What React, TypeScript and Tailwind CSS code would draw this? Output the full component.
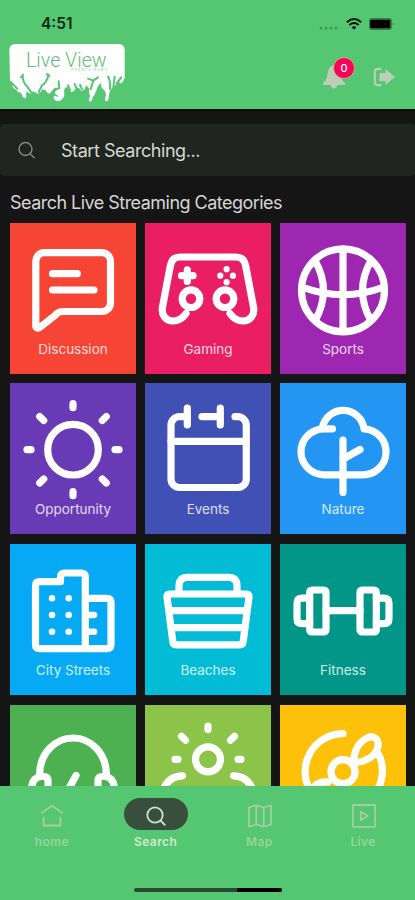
import React from 'react';

interface Category {
    id: number;
    title?: string;
    color: string;
    icon: React.ReactNode;
}

// Icons are drawn in a 126x118 box, the same size as the upper part of a tile
const categories: Category[] = [
    {
        id: 1,
        title: 'Discussion',
        color: 'bg-[#f64435]',
        icon: (
            <>
                <path d="M34.500 29.700H92a8.500 8.500 0 0 1 8.500 8.500V80a8.500 8.500 0 0 1-8.500 8.500H53c-4 0-6 1.200-8 4L31 103.500Q27.500 107 25.800 103.500V38.200A8.500 8.500 0 0 1 34.500 29.700Z" />
                <path d="M42.500 50.700H67.300M42.500 67H84" />
            </>
        ),
    },
    {
        id: 2,
        title: 'Gaming',
        color: 'bg-[#ea1e63]',
        icon: (
            <>
                <path d="M41 90.500c-3 4.500-7 7.500-13 7.500c-7 0-12-6-10.500-14L25.500 42C26.700 37 30 34 35 34H91c5 0 8.300 3 9.500 8l8 42c1.500 8-3.500 14-10.500 14c-6 0-10-3-13-7.500" />
                <circle cx="46" cy="75.700" r="8.800" />
                <circle cx="80" cy="75.700" r="8.800" />
                <path d="M36.500 52.700h11.600M42.300 46.900v11.600" />
                <path strokeWidth="6.200" d="M75.300 52.700h0M88 52.700h0M81.600 46.200h0M81.600 59.200h0" />
            </>
        ),
    },
    {
        id: 3,
        title: 'Sports',
        color: 'bg-[#9d27b1]',
        icon: (
            <>
                <circle cx="63" cy="67.300" r="41.500" />
                <path d="M63 26V108M35.500 38.500Q51.500 67.500 35.500 97M90.500 38.500Q74.500 67.500 90.500 97M22 64Q63 79.500 104 64" />
            </>
        ),
    },
    {
        id: 4,
        title: 'Opportunity',
        color: 'bg-[#683ab6]',
        icon: (
            <>
                <circle cx="63" cy="66.700" r="25.300" />
                <path d="M63 20.700v4M63 108.700v4M17 66.700h4M105 66.700h4M29.700 33.500l4 4M92.300 37.500l4-4M29.700 100l4-4M92.300 96l4 4" />
            </>
        ),
    },
    {
        id: 5,
        title: 'Events',
        color: 'bg-[#4050b4]',
        icon: (
            <>
                <path d="M42.300 33.700H34.500A8.500 8.500 0 0 0 26 42.200V96a8.500 8.500 0 0 0 8.500 8.500H92.800a8.500 8.500 0 0 0 8.500-8.500V42.200a8.500 8.500 0 0 0-8.500-8.500H90" />
                <path d="M57 33.700H75.300M42.300 25v17M75.300 25v17M26 58.300H101" />
            </>
        ),
    },
    {
        id: 6,
        title: 'Nature',
        color: 'bg-[#2396f4]',
        icon: (
            <>
                <path d="M52.500 45.800H44A23 23 0 0 0 44 91.800H82A23 23 0 0 0 84 45.800A21 21 0 0 0 42.500 44.500" />
                <path d="M63 57V109.500M63 76L80 66.500" />
            </>
        ),
    },
    {
        id: 7,
        title: 'City Streets',
        color: 'bg-[#05a9f4]',
        icon: (
            <>
                <path d="M75.300 104.700H29.500Q25.500 104.700 25.500 100.700V41.700Q25.500 37.700 29.500 37.700H50.500V33Q50.500 29 54.500 29H71.300Q75.300 29 75.300 33V104.700H97Q101 104.700 101 100.700V58.300Q101 54.300 97 54.300H76" />
                <path strokeWidth="6.600" d="M42 54.300h0M58.700 54.300h0M42 71h0M58.700 71h0M42 87.700h0M58.700 87.700h0M76 71h8M76 87.700h8" />
            </>
        ),
    },
    {
        id: 8,
        title: 'Beaches',
        color: 'bg-[#02bcd5]',
        icon: (
            <>
                <path d="M34 49V42Q34 33.300 42.500 33.300H83.500Q92 33.300 92 42V49" />
                <path d="M24.500 50H101.500Q104.500 50 104 53L98.200 97.500Q97.800 100.800 94.500 100.800H31.500Q28.200 100.800 27.800 97.500L22 53Q21.500 50 24.500 50Z" />
                <path d="M25 66.700H101M27 83.700H99" />
            </>
        ),
    },
    {
        id: 9,
        title: 'Fitness',
        color: 'bg-[#029688]',
        icon: (
            <>
                <rect x="29.700" y="46" width="16.300" height="42" rx="2" />
                <rect x="80" y="46" width="16.300" height="42" rx="2" />
                <path d="M29.700 54.200H22Q17 54.200 17 59.200V74.700Q17 79.700 22 79.700H29.700M96.300 54.200H104Q109 54.200 109 59.200V74.700Q109 79.700 104 79.700H96.300M46 66.700H80" />
            </>
        ),
    },
    {
        id: 10,
        color: 'bg-[#4db051]',
        icon: (
            <>
                <path d="M29.700 69A33.300 36 0 0 1 96.300 69" />
                <path d="M21.500 84Q22 72.500 31 71.500H34Q38 71.500 38 76V96M104.500 84Q104 72.500 95 71.500H92Q88 71.500 88 76V96M66 70.500L57.500 86" />
            </>
        ),
    },
    {
        id: 11,
        color: 'bg-[#8cc349]',
        icon: (
            <>
                <circle cx="63" cy="54.300" r="12.500" />
                <path d="M63 21v3.500M30 54.300h3M93 54.300h3M36.500 31.200l4 4M85.500 35.200l4-4M37.500 70.800Q24 71 18.500 84M88.500 70.800Q102 71 107.500 84" />
            </>
        ),
    },
    {
        id: 12,
        color: 'bg-[#fec10a]',
        icon: (
            <>
                <path d="M63 28.700A38 38 0 0 0 31 87M98.500 49A38 38 0 0 1 96 87" />
                <circle cx="63" cy="66.700" r="12" />
                <path d="M73.500 59C73.500 46 79 36.500 88 32.500C94 30 99 34.500 98 41C96.500 51 86 56.500 75.500 57.500" />
                <path d="M35 81Q39 76.500 48 77" />
            </>
        ),
    },
];

const navItems = [
    {
        label: 'home',
        active: false,
        icon: <path d="M1 9.200L12 1.800L23 9.200M3.500 13V21.500H20.500V13" />,
    },
    {
        label: 'Search',
        active: true,
        icon: (
            <>
                <circle cx="11" cy="11" r="7.700" />
                <path d="M16.500 16.500L21.300 21.300" />
            </>
        ),
    },
    {
        label: 'Map',
        active: false,
        icon: <path d="M1 3.500L8.300 1.300L15.700 3.500L23 1.300V20.500L15.700 22.700L8.300 20.500L1 22.700ZM8.300 1.300V20.500M15.700 3.500V22.700" />,
    },
    {
        label: 'Live',
        active: false,
        icon: <path d="M1 1H23V22.800H1ZM8.800 7.500V16.300L15.800 11.900Z" />,
    },
];

function StatusBar() {
    return (
        <div className="flex h-10 items-center justify-between pt-[7px] pr-5 pl-[41px]">
            <span className="text-[15.500px] font-semibold text-[#0b2a14]">4:51</span>
            <div className="flex items-center">
                <svg className="mt-2 mr-[7px] h-1 w-5" viewBox="0 0 20 4" fill="#3f9b58">
                    <circle cx="2" cy="2" r="1.500" />
                    <circle cx="7" cy="2" r="1.500" />
                    <circle cx="12" cy="2" r="1.500" />
                    <circle cx="17" cy="2" r="1.500" />
                </svg>
                <svg className="mr-[7px] h-3 w-4" viewBox="0 0 16 12" fill="none" stroke="#04150a" strokeWidth="1.900">
                    <path d="M0.800 4.200Q8-2 15.200 4.200M3.300 7Q8 3.200 12.700 7" />
                    <path d="M5.600 9.300Q8 7.300 10.400 9.300L8 11.800Z" fill="#04150a" stroke="none" />
                </svg>
                <svg className="h-3 w-[26px]" viewBox="0 0 26 12">
                    <rect x="0" y="0" width="23" height="12" rx="3" fill="#2f8448" />
                    <rect x="1.200" y="1.800" width="20" height="8.400" rx="1" fill="#000" />
                    <path d="M23.800 4Q25.500 6 23.800 8Z" fill="#1f6334" />
                </svg>
            </div>
        </div>
    );
}

function Logo() {
    return (
        <svg className="h-[66px] w-[124px]" viewBox="0 0 372 198">
            <path
                d="M10 30Q10 12 28 12H338Q356 12 356 30V112Q354 126 344 130Q340 132 340 126L346 112Q340 112 334 126Q328 138 322 142L314 148Q309 158 308 176Q304 188 297 181Q295 176 300 166Q300 154 292 148Q284 142 284 128L276 138Q272 150 268 158Q266 166 260 172Q258 188 250 184Q247 178 252 168Q247 156 250 146L240 136Q236 152 226 154Q222 144 212 142Q206 154 196 156Q188 150 184 140Q176 142 174 152Q178 168 168 178Q158 188 146 180Q140 174 144 168Q150 166 156 172Q158 166 148 162Q144 156 152 150L148 142Q138 152 132 160Q124 162 118 150L108 148Q106 158 96 162Q88 158 80 154L74 162Q68 160 62 154L60 164Q64 172 56 175Q50 174 48 164L42 156Q36 160 32 150L22 144Q18 132 12 122Z"
                fill="#fff"
            />
            <path
                d="M14 126L34 146M50 108Q50 128 64 140L76 158M128 104Q122 128 108 136L98 156M44 112L52 104M122 102L130 108M158 124L160 144L144 150M186 136L192 150M206 132L212 148M222 134L228 148M246 116L262 122L276 112M262 122L254 148M306 110Q314 122 312 146M326 110L322 142M346 112L332 130"
                fill="none"
                stroke="#55c671"
                strokeWidth="6"
                strokeLinecap="round"
            />
            <text x="60" y="80" textLength="242" lengthAdjust="spacingAndGlyphs" className="font-['Roboto','Lato'] text-[59px] font-light" fill="#5fbe7a">
                Live View
            </text>
            <text x="196" y="94" textLength="108" className="font-['Lato'] text-[11px]" fill="#8fd3a1">
                EVENTS HUB®
            </text>
        </svg>
    );
}

function Header() {
    return (
        <header className="h-[109px] shrink-0 bg-[#55c671]">
            <StatusBar />
            <div className="flex items-start justify-between pr-[19px] pl-1.5">
                <Logo />
                <div className="flex pt-[15px]">
                    <div className="relative">
                        <svg className="mt-2 h-[26px] w-6" viewBox="0 0 24 26" fill="#bccdb8">
                            <path d="M12 2Q18 3 18.500 11Q19 17 23 20V22H1V20Q5 17 5.500 11Q6 3 12 2ZM8.500 22H15.500Q14.500 25.500 12 25.500Q9.500 25.500 8.500 22Z" />
                        </svg>
                        <span className="absolute top-[2px] left-[11px] flex size-[22px] items-center justify-center rounded-full border border-[#c4ae80] bg-[#fb0259] text-[11px] font-medium text-white">
                            0
                        </span>
                    </div>
                    <svg className="mt-3 ml-[27px] h-[20px] w-[23px]" viewBox="0 0 23 20" fill="none">
                        <path d="M8.500 1.800H5Q1.800 1.800 1.800 5V15Q1.800 18.200 5 18.200H8.500" stroke="#bccdb8" strokeWidth="2.200" />
                        <path d="M6.500 6H12.500V2L22 10L12.500 18V14H6.500Z" fill="#bccdb8" />
                    </svg>
                </div>
            </div>
        </header>
    );
}

function CategoryTile({ category }: { category: Category }) {
    return (
        <div className={`flex h-[151px] flex-col items-center ${category.color}`}>
            <svg
                className="h-[118px] w-full shrink-0"
                viewBox="0 0 126 118"
                fill="none"
                stroke="#fff"
                strokeWidth="7.200"
                strokeLinecap="round"
                strokeLinejoin="round"
            >
                {category.icon}
            </svg>
            {category.title && <span className="text-[13.500px] leading-4 text-white/80">{category.title}</span>}
        </div>
    );
}

function BottomNav() {
    return (
        <nav className="flex h-[114.500px] shrink-0 flex-col bg-[#55c671]">
            <div className="grid grid-cols-4 pt-[12.500px]">
                {navItems.map(item => (
                    <div key={item.label} className="flex flex-col items-center">
                        <div className={`flex h-8 w-16 items-center justify-center rounded-full ${item.active ? 'bg-[#384f3b]' : ''}`}>
                            <svg
                                className="mt-1 ml-px size-6"
                                viewBox="0 0 24 24"
                                fill="none"
                                stroke={item.active ? '#d3e2d0' : '#a6cda1'}
                                strokeWidth="1.800"
                                strokeLinejoin="round"
                            >
                                {item.icon}
                            </svg>
                        </div>
                        <span className={`mt-1 text-[12px] leading-4 font-semibold tracking-[0.400px] ${item.active ? 'text-[#d0ebcf]' : 'text-[#98d49b]'}`}>
                            {item.label}
                        </span>
                    </div>
                ))}
            </div>
            <div className="mt-auto mb-2 ml-[134px] flex h-1 w-[148px] overflow-hidden rounded-full bg-[#264a30]">
                <div className="ml-auto w-[45px] bg-black" />
            </div>
        </nav>
    );
}

const App: React.FC = () => {
    return (
        <div className="flex h-[900px] w-full flex-col overflow-hidden bg-[#151515] font-['Inter','Liberation_Sans',sans-serif]">
            <Header />
            <main className="min-h-0 flex-1 overflow-hidden border-t-2 border-[#050a06]">
                <div className="mt-[13px] flex h-[52px] items-center rounded bg-[#202520] pl-[17px]">
                    <svg className="size-5" viewBox="0 0 20 20" fill="none" stroke="#858a85" strokeWidth="1.400">
                        <circle cx="8.500" cy="9" r="6.500" />
                        <path d="M13.200 13.700L17.500 18" />
                    </svg>
                    <span className="ml-6 text-[18px] tracking-[-0.450px] text-[#d5d8d5]">Start Searching...</span>
                </div>
                <h1 className="mt-[15px] mb-[7.500px] pl-[10px] text-[18px] leading-6 tracking-[-0.530px] text-[#d6d6d6]">
                    Search Live Streaming Categories
                </h1>
                <div className="grid grid-cols-3 gap-x-[9px] gap-y-[9.800px] pr-[9px] pl-[10px]">
                    {categories.map(category => (
                        <CategoryTile key={category.id} category={category} />
                    ))}
                </div>
            </main>
            <BottomNav />
        </div>
    );
};

export default App;
